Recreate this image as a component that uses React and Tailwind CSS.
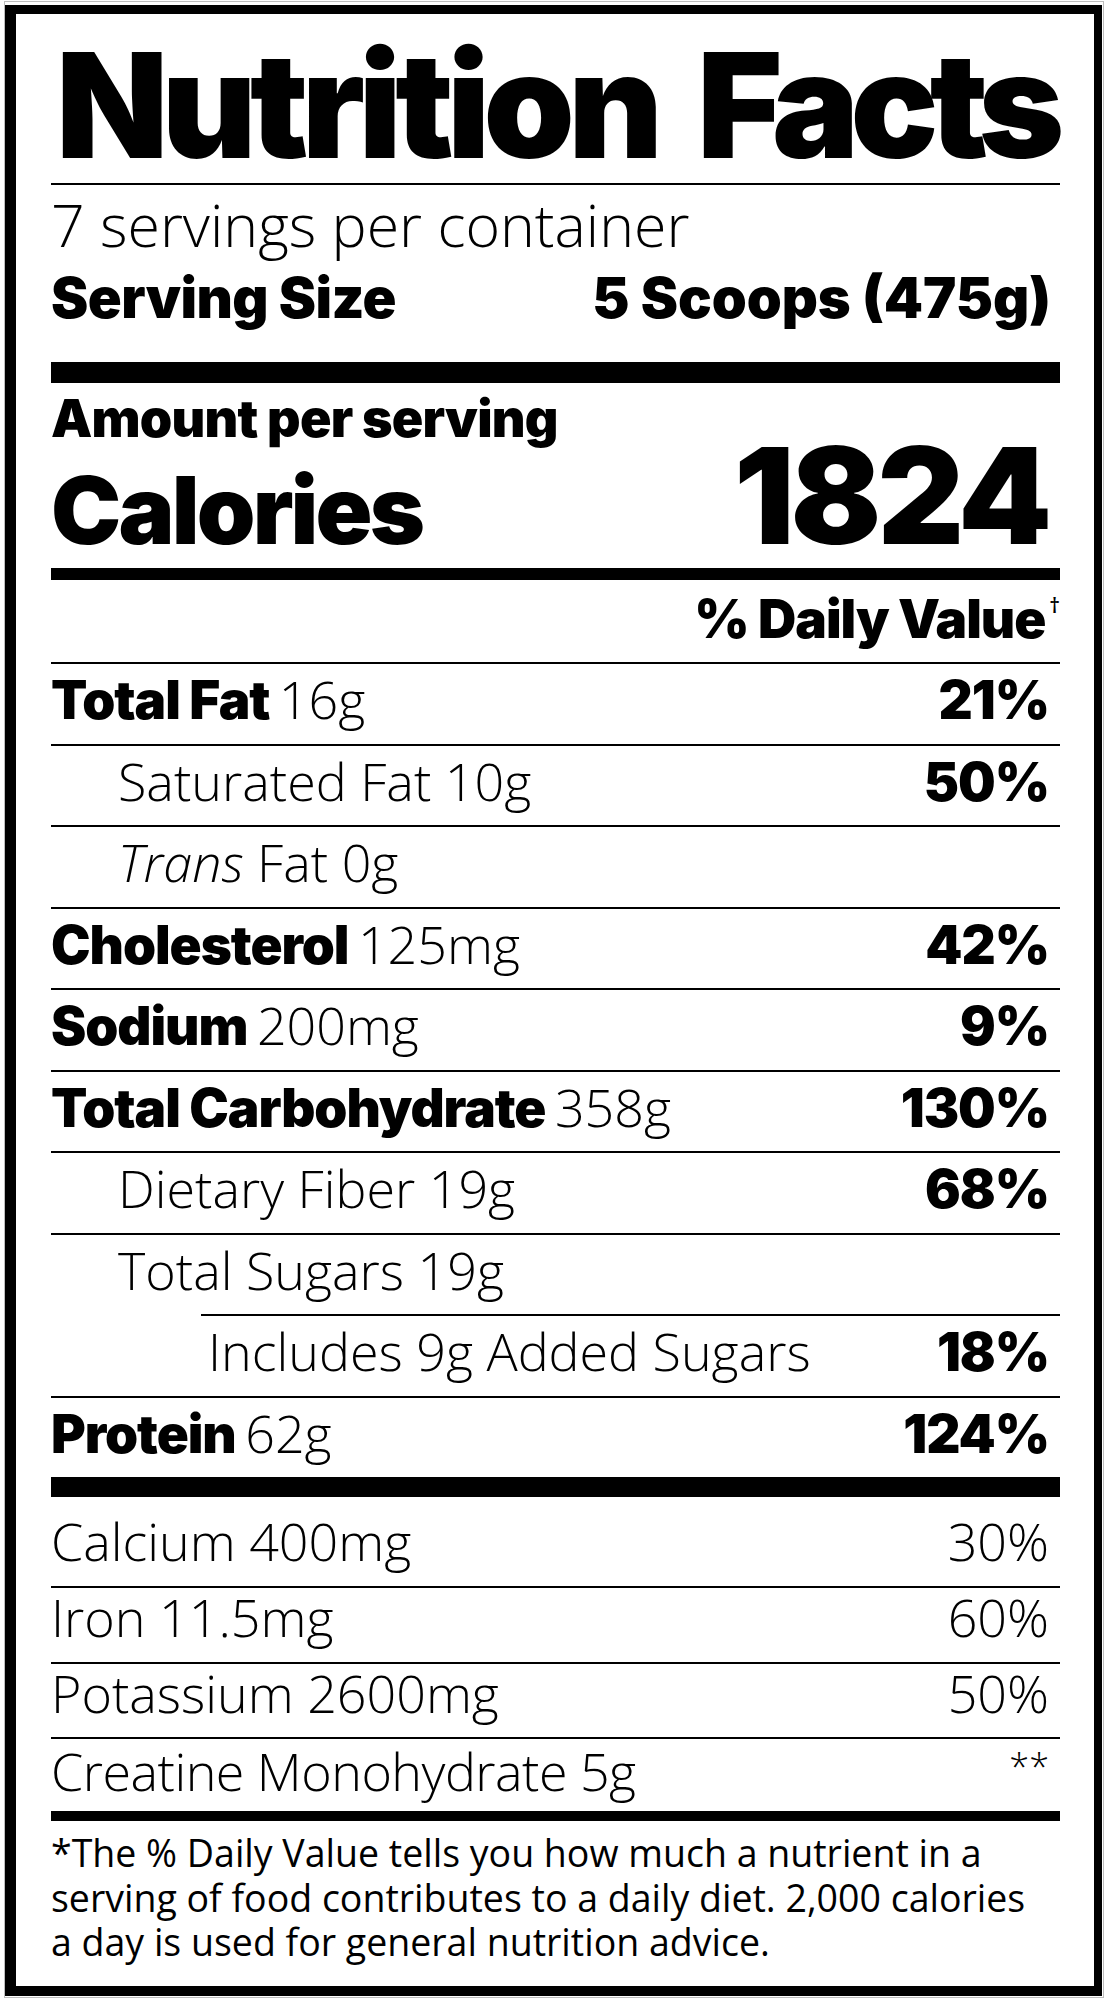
const heavy = "font-['Inter',sans-serif] font-black";
const light = "font-['Open_Sans',sans-serif] font-[350]";

const nutrients = [
  { bold: 'Total Fat', amount: '16g', dv: '21%' },
  { amount: 'Saturated Fat 10g', dv: '50%', indent: 1 },
  { amount: 'Fat 0g', italic: 'Trans', indent: 1 },
  { bold: 'Cholesterol', amount: '125mg', dv: '42%' },
  { bold: 'Sodium', amount: '200mg', dv: '9%' },
  { bold: 'Total Carbohydrate', amount: '358g', dv: '130%' },
  { amount: 'Dietary Fiber 19g', dv: '68%', indent: 1 },
  { amount: 'Total Sugars 19g', indent: 1, shortRule: true },
  { amount: 'Includes 9g Added Sugars', dv: '18%', indent: 2 },
  { bold: 'Protein', amount: '62g', dv: '124%' },
];

const minerals = [
  { label: 'Calcium 400mg', dv: '30%', box: 'h-[89px] pt-[18px]' },
  { label: 'Iron 11.5mg', dv: '60%', box: 'h-[74px] pt-[3px]' },
  { label: 'Potassium 2600mg', dv: '50%', box: 'h-[73px] pt-[3px]' },
];

const indents = ['', 'pl-[67px]', 'pl-[157px]'];

function NutrientRow({ item }) {
  return (
    <div className={`h-[79.5px] pt-[8px] pr-[11px] flex items-baseline justify-between leading-none ${indents[item.indent || 0]}`}>
      <span className="text-[53px] leading-none whitespace-nowrap">
        {item.bold && <span className={`${heavy} tracking-[-0.02em]`}>{item.bold + ' '}</span>}
        <span className={`${light} text-[52px]`}>
          {item.italic && <i>{item.italic + ' '}</i>}
          {item.amount}
        </span>
      </span>
      {item.dv && <span className={`${heavy} text-[53px] tracking-[-0.02em]`}>{item.dv}</span>}
    </div>
  );
}

const Rule = ({ className = '' }) => <div className={`h-[2px] bg-black ${className}`} />;

export default function App() {
  return (
    <div className="min-h-screen bg-white text-black">
      <div className="ml-[4px] mt-[1px] w-[1100px] h-[1997px] border border-[#bdbdbd]">
        <div className="mt-[3px] mr-[1px] h-[1991px] border-t-[9px] border-l-[11px] border-r-[8px] border-b-[10px] border-black pl-[35px] pr-[34px]">
          {/* Title */}
          <div className="h-[169px] pt-[18px] pl-[5px]">
            <h1 className={`${heavy} text-[146px] leading-none tracking-[-0.045em] whitespace-nowrap [word-spacing:18px]`}>
              Nutrition <span className="tracking-[-0.06em]">Facts</span>
            </h1>
          </div>
          <Rule />

          {/* Servings */}
          <div className="h-[69px] pt-[10px]">
            <p className={`${light} text-[59px] leading-none whitespace-nowrap`}>7 servings per container</p>
          </div>
          <div className="h-[108px] pt-[16px] pr-[9px] flex items-baseline justify-between leading-none">
            <span className={`${heavy} text-[56px] tracking-[-0.01em]`}>Serving Size</span>
            <span className={`${heavy} text-[56px]`}>5 Scoops (475g)</span>
          </div>
          <div className="h-[21px] bg-black" />

          {/* Calories */}
          <div className="h-[62px] pt-[10px]">
            <p className={`${heavy} text-[52px] leading-none tracking-[-0.015em]`}>Amount per serving</p>
          </div>
          <div className="h-[123px] pr-[12px] flex items-baseline justify-between">
            <span className={`${heavy} text-[94px] leading-none tracking-[-0.03em]`}>Calories</span>
            <span className={`${heavy} text-[134px] leading-[100px] tracking-[-0.03em]`}>1824</span>
          </div>
          <div className="h-[12px] bg-black" />

          {/* % Daily Value header */}
          <div className="h-[82px] pt-[13px] flex justify-end leading-none">
            <span className={`${heavy} text-[53px] leading-none tracking-[-0.02em]`}>% Daily Value</span>
            <span className="font-['Open_Sans',sans-serif] font-semibold text-[21px] leading-none ml-[4px] mt-[2px]">†</span>
          </div>
          <Rule />

          {/* Nutrients */}
          {nutrients.map((item, i) => (
            <div key={i}>
              <NutrientRow item={item} />
              {i < nutrients.length - 1 && <Rule className={item.shortRule ? 'ml-[150px]' : ''} />}
            </div>
          ))}
          <div className="h-[20px] bg-black" />

          {/* Vitamins & minerals */}
          <div className={`${light} text-[52px] leading-none`}>
            {minerals.map((m) => (
              <div key={m.label}>
                <div className={`${m.box} pr-[11px] flex items-baseline justify-between`}>
                  <span>{m.label}</span>
                  <span>{m.dv}</span>
                </div>
                <Rule />
              </div>
            ))}
            <div className="h-[72px] pt-[6px] pr-[11px] flex justify-between">
              <span className="tracking-[-0.01em]">Creatine Monohydrate 5g</span>
              <span className="text-[36px] mt-[4px]">**</span>
            </div>
          </div>
          <div className="h-[10px] bg-black" />

          {/* Footnote */}
          <p className="font-['Open_Sans',sans-serif] text-[37.5px] leading-[44.5px] pt-[10px] whitespace-nowrap">
            *The % Daily Value tells you how much a nutrient in a
            <br />
            serving of food contributes to a daily diet. 2,000 calories
            <br />
            a day is used for general nutrition advice.
          </p>
        </div>
      </div>
    </div>
  );
}
